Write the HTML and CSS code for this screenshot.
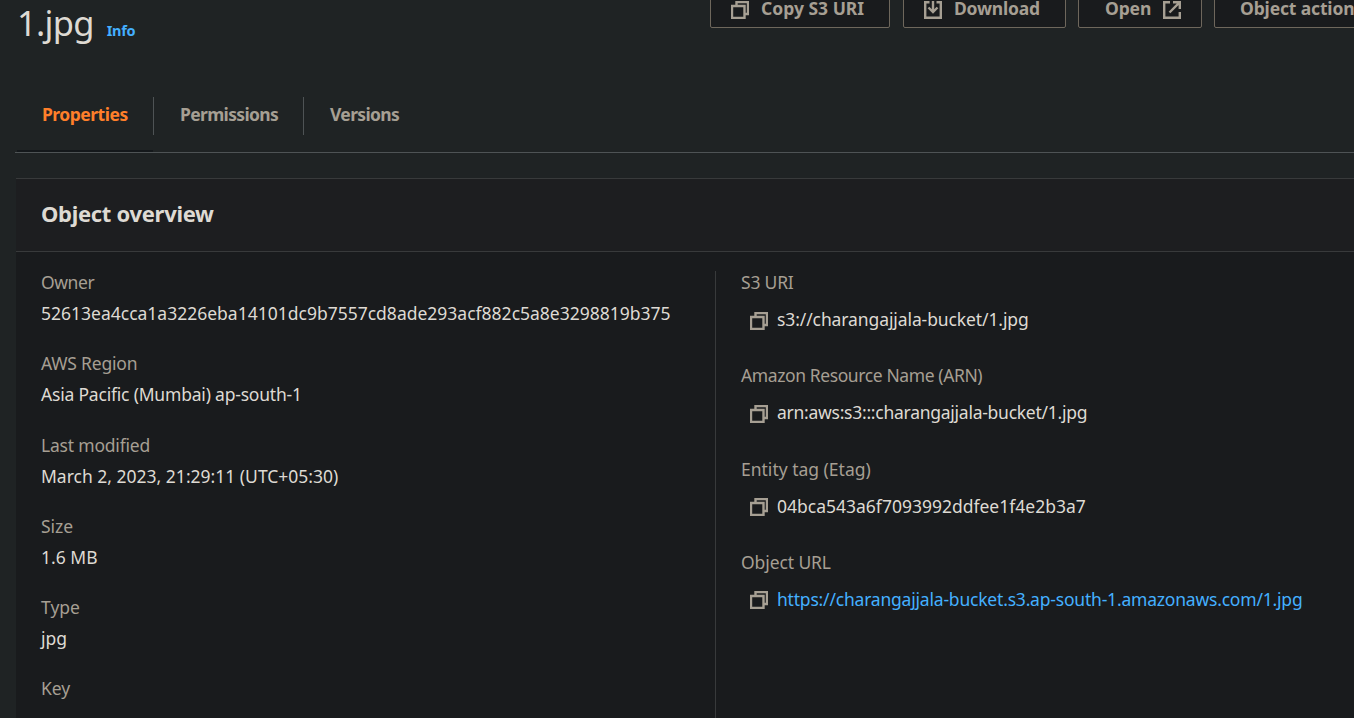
FILE: index.html
```html
<!DOCTYPE html>
<html lang="en">
<head>
<meta charset="utf-8">
<title>1.jpg</title>
<link rel="stylesheet" href="styles.css">
</head>
<body>
<svg class="defs" aria-hidden="true">
  <symbol id="copy" viewBox="0 0 18 18"><path d="M5.500 4V1H17v12h-3M1 5h12.500v12H1z"/></symbol>
</svg>
<header class="top">
  <div class="title"><h1>1.jpg</h1><a class="info">Info</a></div>
  <div class="actions">
    <button class="btn copy"><svg class="icon"><use href="#copy"/></svg><span>Copy S3 URI</span></button>
    <button class="btn download"><svg class="icon" viewBox="0 0 18 18"><path d="M5.500 1.200H1.200v15.600h15.600V1.200h-4.300M9 0v11M4.500 6.500L9 11l4.500-4.500"/></svg><span>Download</span></button>
    <button class="btn open"><span>Open</span><svg class="icon" viewBox="0 0 18 18"><path d="M7 1.200H1.200v15.600h15.600V11M10 1.200h6.800V8M16.800 1.200L6.500 11.500"/></svg></button>
    <button class="btn more"><span>Object actions</span></button>
  </div>
</header>
<nav class="tabs">
  <a class="tab active">Properties</a>
  <a class="tab permissions">Permissions</a>
  <a class="tab versions">Versions</a>
</nav>
<section class="panel">
  <div class="panel-head"><h2>Object overview</h2></div>
  <div class="columns">
    <dl class="col left">
      <div class="field"><dt class="narrow">Owner</dt><dd>52613ea4cca1a3226eba14101dc9b7557cd8ade293acf882c5a8e3298819b375</dd></div>
      <div class="field"><dt class="snug">AWS Region</dt><dd class="snug">Asia Pacific (Mumbai) ap-south-1</dd></div>
      <div class="field"><dt class="snug">Last modified</dt><dd>March 2, 2023, 21:29:11 (UTC+05:30)</dd></div>
      <div class="field"><dt>Size</dt><dd>1.6 MB</dd></div>
      <div class="field"><dt>Type</dt><dd>jpg</dd></div>
      <div class="field"><dt>Key</dt></div>
    </dl>
    <dl class="col right">
      <div class="field"><dt class="snug">S3 URI</dt><dd class="uri"><svg class="icon"><use href="#copy"/></svg><span>s3://charangajjala-bucket/1.jpg</span></dd></div>
      <div class="field"><dt class="narrow">Amazon Resource Name (ARN)</dt><dd class="arn"><svg class="icon"><use href="#copy"/></svg><span>arn:aws:s3:::charangajjala-bucket/1.jpg</span></dd></div>
      <div class="field"><dt>Entity tag (Etag)</dt><dd><svg class="icon"><use href="#copy"/></svg><span>04bca543a6f7093992ddfee1f4e2b3a7</span></dd></div>
      <div class="field"><dt class="uri">Object URL</dt><dd class="snug"><svg class="icon"><use href="#copy"/></svg><a class="link">https://charangajjala-bucket.s3.ap-south-1.amazonaws.com/1.jpg</a></dd></div>
    </dl>
  </div>
</section>
</body>
</html>
```
FILE: styles.css
```css
* { box-sizing: border-box; }
body { display: flex; flex-direction: column; margin: 0; width: 100%; height: 718px; overflow: hidden; background: #1f2324; color: #dedad3; font: 17.5px/25px "Noto Sans", sans-serif; }
h1, h2, dl, dd { margin: 0; }
.defs { display: none; }
.icon { width: 18px; height: 18px; flex: none; fill: none; stroke: #a69f93; stroke-width: 2.4; }

.top { display: flex; flex: none; justify-content: space-between; height: 97px; padding-left: 17px; overflow: hidden; }
.title { display: flex; height: 48px; align-items: baseline; gap: 13px; }
h1 { font-size: 34.5px; font-weight: 400; line-height: 45px; letter-spacing: -0.7px; }
.info { color: #44b0ff; font-size: 14.5px; font-weight: 700; letter-spacing: -0.35px; }
.actions { display: flex; flex: none; gap: 12px; width: 644px; }
.btn { display: flex; flex: none; align-items: center; gap: 12px; height: 39px; margin: -11px 0 0; padding: 0 20px; background: #191b1d; border: 1px solid #6e675c; border-radius: 2px; color: #a69f93; font: 700 17.5px/25px "Noto Sans", sans-serif; white-space: nowrap; }
.btn .icon { margin-top: 2px; }
.copy { width: 180px; margin-right: 1px; }
.download { width: 163px; letter-spacing: -0.2px; }
.open { width: 124px; padding-left: 26px; letter-spacing: -0.15px; }
.more { padding: 0 25px; letter-spacing: -0.15px; }

.tabs { display: flex; flex: none; height: 56px; margin-left: 15px; border-bottom: 1px solid #4e5355; }
.tab { height: 38px; padding-left: 26px; line-height: 35px; font-weight: 700; color: #a69f93; border-right: 1px solid #4e5355; letter-spacing: -0.65px; }
.tab.active { position: relative; width: 139px; padding-left: 27px; color: #ff7f2a; letter-spacing: -0.5px; }
.tab.active::after { content: ""; position: absolute; left: 2px; right: 0; top: 53px; height: 2px; background: #14181b; }
.permissions { width: 150px; }
.tab.versions { border: 0; }

.panel { flex: 1; min-height: 0; display: flex; flex-direction: column; margin: 25px 0 0 16px; background: #191b1d; border-top: 1px solid #383a3b; overflow: hidden; }
.panel-head { flex: none; height: 73px; padding-left: 25px; background: #1d1e20; border-bottom: 1px solid #383a3b; }
h2 { font-size: 22px; line-height: 69px; letter-spacing: -0.3px; }
.columns { display: flex; flex: 1; min-height: 0; padding-top: 19px; }
.col { padding-left: 25px; white-space: nowrap; }
.left { width: 699px; }
.right { flex: 1; border-left: 1px solid #383a3b; }
.left .field { height: 81.25px; }
.right .field { height: 93.3px; }
.left .field:last-child { height: 25px; }
dt { padding-bottom: 2px; color: #a69f93; line-height: 23px; }
.left dd { margin-top: 5px; }
.right dd { display: flex; align-items: center; gap: 9px; padding-left: 9px; margin-top: 11px; }
.right .icon { margin-top: 2px; }
.link { color: #44b0ff; }

.narrow { letter-spacing: -0.4px; }
.snug { letter-spacing: -0.2px; }
.uri { letter-spacing: -0.1px; }
.arn { letter-spacing: -0.26px; }
```
